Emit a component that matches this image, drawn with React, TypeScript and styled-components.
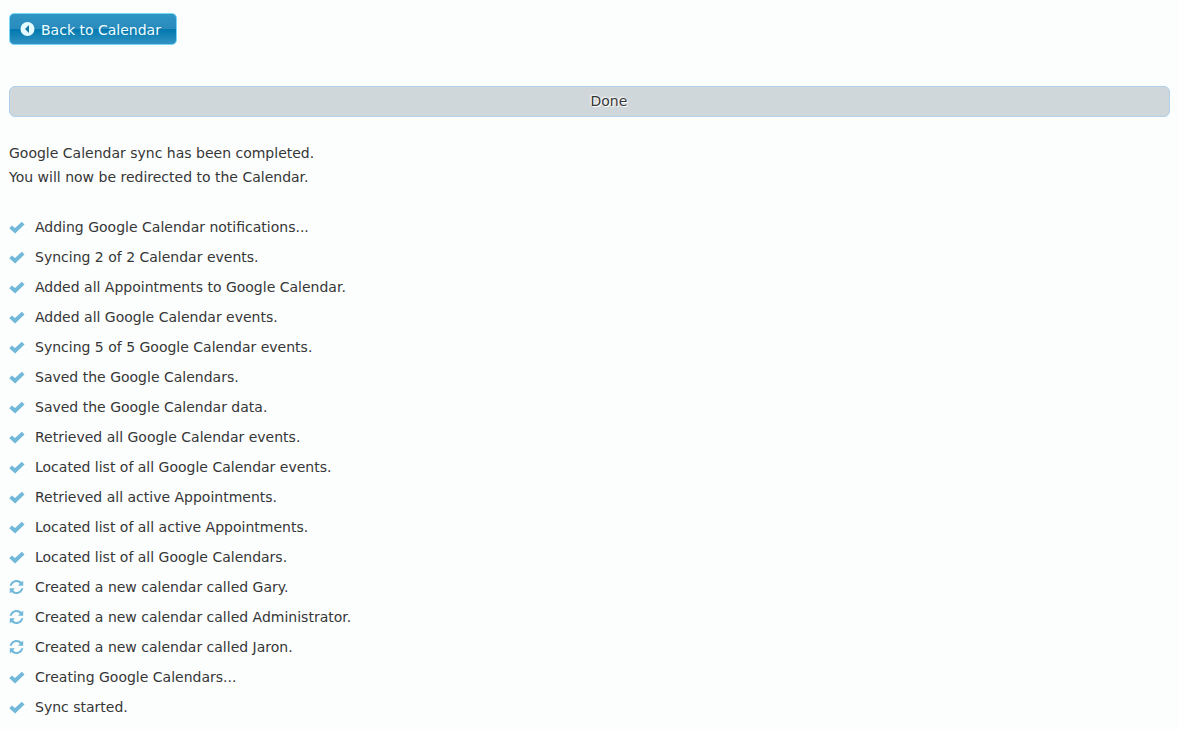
import React from "react";
import styled, { createGlobalStyle } from "styled-components";

const GlobalStyle = createGlobalStyle`
  body {
    margin: 0;
    background: #fcfefe;
    color: #363636;
    font-family: "DejaVu Sans", Verdana, sans-serif;
    font-size: 14px;
    line-height: 24px;
  }
`;

const Page = styled.main`
  padding: 13px 9px 4px;
`;

const BackButton = styled.button`
  display: flex;
  align-items: center;
  gap: 6px;
  height: 32px;
  padding: 1px 15px 0 10px;
  border: 1px solid #77d5f7;
  border-radius: 5px;
  background: linear-gradient(#2f96c4 0%, #2a8bbc 49%, #0078ae 50%, #3292c2 100%);
  color: #f0fdff;
  font: inherit;
  cursor: pointer;
`;

const Progress = styled.div`
  margin-top: 41px;
  padding: 2px 0 3px 50%;
  border: 1px solid #aed0ea;
  border-radius: 6px;
  background: #d0d7da;
  text-shadow: 1px 1px 0 #fff, -1px -1px 2px #fff;
`;

const Summary = styled.p`
  margin: 24px 0 23px;
`;

const LogList = styled.ul`
  margin: 0;
  padding: 0;
  list-style: none;
`;

const LogEntry = styled.li`
  display: flex;
  align-items: center;
  gap: 10px;
  height: 30px;
`;

const Glyph = styled.svg`
  flex: none;
  width: 16px;
  height: 16px;
  fill: #72b8d9;
`;

const BackIcon = () => (
  <svg width="15" height="15" viewBox="0 0 15 15" aria-hidden="true">
    <circle cx="7.5" cy="7" r="7" fill="#e4fbff" />
    <path d="M9 3v8L5 7z" fill="#1579a8" />
  </svg>
);

const CheckIcon = () => (
  <Glyph viewBox="0 0 16 16" aria-hidden="true">
    <path d="M.3 9.300l2.500-2.800 3.200 2.600 6.800-6.300 2.700 2.700-9.400 8.900z" />
  </Glyph>
);

const SyncIcon = () => (
  <Glyph viewBox="0 0 16 16" aria-hidden="true">
    <path d="M.7 6.800C1.300 3.400 4.200 1 7.700 1c1.900 0 3.600.8 4.900 2L14.200 1.500v5.300H9l1.900-2C10 4 8.900 3 7.600 3c-2.200 0-4.200 1.600-4.900 3.800zM14.300 9.200c-.6 3.400-3.500 5.800-7 5.800-1.900 0-3.600-.8-4.900-2L.8 14.500V9.200H6l-1.900 2c.9.8 2 1.800 3.300 1.800 2.200 0 4.200-1.600 4.900-3.800z" />
  </Glyph>
);

type Entry = { text: string; created?: boolean };

const entries: Entry[] = [
  { text: "Adding Google Calendar notifications..." },
  { text: "Syncing 2 of 2 Calendar events." },
  { text: "Added all Appointments to Google Calendar." },
  { text: "Added all Google Calendar events." },
  { text: "Syncing 5 of 5 Google Calendar events." },
  { text: "Saved the Google Calendars." },
  { text: "Saved the Google Calendar data." },
  { text: "Retrieved all Google Calendar events." },
  { text: "Located list of all Google Calendar events." },
  { text: "Retrieved all active Appointments." },
  { text: "Located list of all active Appointments." },
  { text: "Located list of all Google Calendars." },
  { text: "Created a new calendar called Gary.", created: true },
  { text: "Created a new calendar called Administrator.", created: true },
  { text: "Created a new calendar called Jaron.", created: true },
  { text: "Creating Google Calendars..." },
  { text: "Sync started." },
];

export default function App() {
  return (
    <>
      <GlobalStyle />
      <Page>
        <BackButton type="button">
          <BackIcon />
          Back to Calendar
        </BackButton>
        <Progress role="status">Done</Progress>
        <Summary>
          Google Calendar sync has been completed.
          <br />
          You will now be redirected to the Calendar.
        </Summary>
        <LogList>
          {entries.map(({ text, created }) => (
            <LogEntry key={text}>
              {created ? <SyncIcon /> : <CheckIcon />}
              <span>{text}</span>
            </LogEntry>
          ))}
        </LogList>
      </Page>
    </>
  );
}
